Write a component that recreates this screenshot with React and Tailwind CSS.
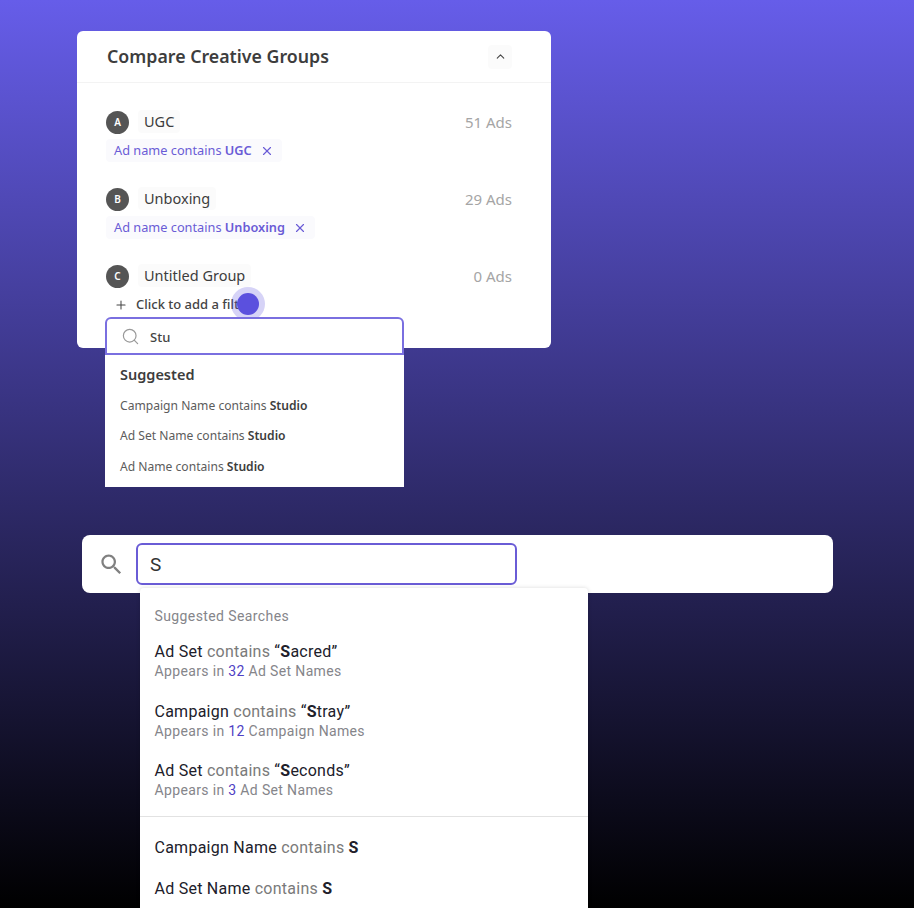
import React from 'react';
import { ChevronUp, Plus, Search, X } from 'lucide-react';

const plex = "font-['Noto_Sans','Open_Sans',sans-serif]";
const roboto = "font-['Roboto',sans-serif]";

const MaterialSearch = () => (
    <svg width="27" height="27" viewBox="0 0 24 24" fill="#808080">
        <path d="M15.5 14h-.79l-.28-.27C15.41 12.59 16 11.11 16 9.5 16 5.91 13.09 3 9.5 3S3 5.91 3 9.5 5.91 16 9.5 16c1.61 0 3.09-.59 4.23-1.57l.27.28v.79l5 4.99L20.49 19l-4.99-5zm-6 0C7.01 14 5 11.99 5 9.5S7.01 5 9.5 5 14 7.01 14 9.5 11.99 14 9.5 14z" />
    </svg>
);

const Group = ({ letter, name, count, filter, className }) => (
    <div className={className}>
        <div className="flex items-center h-[24px]">
            <div className="flex items-center justify-center w-[23px] h-[23px] rounded-full bg-[#555555] text-white text-[10px] font-semibold">
                {letter}
            </div>
            <div className="ml-[9px] px-[6px] h-[23px] -mt-[1px] flex items-center rounded bg-[#fbfbfb] text-[14.5px] text-[#3d3d3d]">
                {name}
            </div>
            <div className="ml-auto mr-[1px] text-[15px] text-[#a5a5a5]">{count} Ads</div>
        </div>
        {filter && (
            <div className="mt-[5px] inline-flex items-center h-[23px] pl-[8px] pr-[8px] rounded bg-[#fafafd] text-[12.75px] text-[#6a5cd6]">
                <span>Ad name contains <b className="font-semibold">{filter}</b></span>
                <X size={14} strokeWidth={2} className="ml-[8px]" />
            </div>
        )}
    </div>
);

const Suggestion = ({ kind, rest, count, names }) => (
    <div className="h-[59.5px]">
        <div className="text-[16px] leading-[20px] text-[#20202a] tracking-[0.25px]">
            {kind} <span className="text-[#7a7a7a]">contains</span> “<b className="font-bold">S</b>{rest}”
        </div>
        <div className="text-[14px] leading-[18px] text-[#85858a] tracking-[0.35px]">
            Appears in <span className="text-[#4f3fc4]">{count}</span> {names}
        </div>
    </div>
);

const App = () => {
    return (
        <div className="h-[908px] w-[914px] overflow-hidden bg-linear-to-b/srgb from-[#665de9] to-black">
            {/* Compare card */}
            <div className="pt-[31px] pl-[77px]">
                <div className={`w-[474px] h-[317px] rounded-[6px] bg-white ${plex}`}>
                    <div className="flex items-center justify-between h-[52px] pl-[30px] pr-[39px] border-b border-[#f3f3f3]">
                        <div className="text-[17.75px] font-semibold text-[#3d3d3d]">Compare Creative Groups</div>
                        <div className="flex items-center justify-center w-[24px] h-[24px] rounded bg-[#fbfbfb]">
                            <ChevronUp size={13} strokeWidth={2} className="text-[#444444]" />
                        </div>
                    </div>

                    <div className="pl-[29px] pr-[38px] pt-[27px]">
                        <Group letter="A" name="UGC" count="51" filter="UGC" />
                        <Group className="mt-[25px]" letter="B" name="Unboxing" count="29" filter="Unboxing" />
                        <Group className="mt-[25px]" letter="C" name="Untitled Group" count="0" />

                        <div className="relative flex items-center h-[23px] mt-[5px] pl-[8px] text-[13px] font-medium text-[#444444]">
                            <Plus size={14} strokeWidth={1.75} />
                            <span className="ml-[8px] whitespace-nowrap">Click to add a filt</span>
                            <div className="absolute left-[125px] top-[-6px] flex items-center justify-center w-[34px] h-[34px] rounded-full bg-[#5b50e0]/25">
                                <div className="w-[22px] h-[22px] rounded-full bg-[#5b50de]" />
                            </div>
                        </div>

                        {/* Filter search dropdown, hangs out of the card */}
                        <div className="relative w-[299px] -ml-[1px] mt-[1px]">
                            <div className="flex items-center h-[38px] pl-[14px] rounded-t-[6px] border-2 border-[#7a6fe0] bg-white">
                                <Search size={19} strokeWidth={1.5} className="text-[#999999]" />
                                <span className="ml-[10px] mt-[3px] text-[13px] font-medium text-[#444444]">Stu</span>
                            </div>
                            <div className="h-[132px] bg-white pl-[15px] pt-[9px] text-[12.1px] text-[#5c5c5c]">
                                <div className="text-[14.5px] leading-[20px] font-semibold text-[#3d3d3d]">Suggested</div>
                                <div className="mt-[13px] leading-[18px]">Campaign Name contains <b className="font-semibold text-[#3d3d3d]">Studio</b></div>
                                <div className="mt-[12px] leading-[18px]">Ad Set Name contains <b className="font-semibold text-[#3d3d3d]">Studio</b></div>
                                <div className="mt-[13px] leading-[18px]">Ad Name contains <b className="font-semibold text-[#3d3d3d]">Studio</b></div>
                            </div>
                        </div>
                    </div>
                </div>
            </div>

            {/* Search bar */}
            <div className={`mt-[187px] ml-[82px] ${roboto}`}>
                <div className="flex items-center w-[751px] h-[58px] rounded-[8px] bg-white pl-[16px]">
                    <MaterialSearch />
                    <div className="flex items-center ml-[11px] w-[381px] h-[42px] pl-[12px] pt-[2px] rounded-[6px] border-2 border-[#6a5cd6] text-[19px] text-[#333333]">
                        S
                    </div>
                </div>

                <div className="relative ml-[58px] mt-[-5px] w-[448px] h-[320px] rounded-t-[4px] bg-white pt-[19px] shadow-[0_0_4px_rgba(0,0,0,0.15)]">
                    <div className="pl-[14.5px]">
                        <div className="text-[14px] leading-[18px] text-[#85858a] tracking-[0.4px]">Suggested Searches</div>
                        <div className="mt-[17px]">
                            <Suggestion kind="Ad Set" rest="acred" count="32" names="Ad Set Names" />
                            <Suggestion kind="Campaign" rest="tray" count="12" names="Campaign Names" />
                            <Suggestion kind="Ad Set" rest="econds" count="3" names="Ad Set Names" />
                        </div>
                    </div>
                    <div className="mt-[-5px] border-t border-[#e2e2e2]" />
                    <div className="pl-[14.5px] pt-[21px] text-[16px] leading-[20px] text-[#20202a] tracking-[0.25px]">
                        <div>Campaign Name <span className="text-[#7a7a7a]">contains</span> <b className="font-bold">S</b></div>
                        <div className="mt-[21px]">Ad Set Name <span className="text-[#7a7a7a]">contains</span> <b className="font-bold">S</b></div>
                    </div>
                </div>
            </div>
        </div>
    );
};

export default App;
